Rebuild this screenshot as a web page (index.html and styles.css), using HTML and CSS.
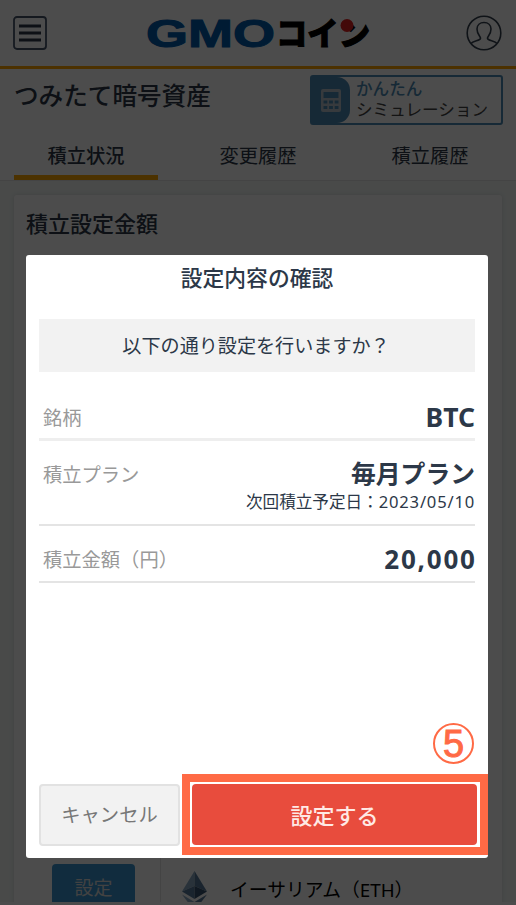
FILE: index.html
```html
<!DOCTYPE html>
<html lang="ja">
<head>
  <meta charset="utf-8">
  <title>つみたて暗号資産</title>
  <link rel="stylesheet" href="styles.css">
</head>
<body>

<div class="page">
  <header class="header">
    <svg class="menu-icon" viewBox="0 0 34 36">
      <rect x="1" y="2" width="32" height="32" rx="3" fill="none" stroke="#46546a" stroke-width="1.8"/>
      <path d="M6 11h22M6 18h22M6 25h22" stroke="#2c3848" stroke-width="2.8"/>
    </svg>
    <svg class="logo" viewBox="0 0 224 52">
      <text class="logo-gmo" x="0" y="39.500" textLength="129" lengthAdjust="spacingAndGlyphs">GMO</text>
      <text class="logo-coin" x="130" y="38" textLength="94" lengthAdjust="spacingAndGlyphs">コイン</text>
      <circle cx="201" cy="18.500" r="6.5" fill="#e02020"/>
    </svg>
    <svg class="user-icon" viewBox="0 0 36 36" fill="none" stroke="#35404f" stroke-width="1.6">
      <circle cx="18" cy="18" r="16.8"/>
      <path d="M5 28.500c2-3 9-2.500 9.500-5c.5-2-3.500-3.500-3.500-9.500c0-4 3-6.500 7-6.500s7 2.500 7 6.500c0 6-4 7.500-3.500 9.500c.5 2.500 7.500 2 9.500 5"/>
    </svg>
  </header>

  <div class="title-row">
    <h1>つみたて暗号資産</h1>
    <div class="simulation">
      <div class="simulation-icon">
        <svg viewBox="0 0 20 23" width="20" height="23">
          <rect width="20" height="23" rx="2" fill="#b8c4cc"/>
          <path d="M2.500 3h15v6h-15z" fill="#4c8ab4"/>
          <path d="M2.500 13h15M2.500 18.500h15" stroke="#4c8ab4" stroke-width="3" stroke-dasharray="3.800 1.800"/>
        </svg>
      </div>
      <div class="simulation-text"><b>かんたん</b><span>シミュレーション</span></div>
    </div>
  </div>

  <nav class="tabs">
    <div class="tab active">積立状況</div>
    <div class="tab">変更履歴</div>
    <div class="tab">積立履歴</div>
  </nav>

  <main class="content">
    <div class="card">
      <h2>積立設定金額</h2>
      <div class="coin-row">
        <div class="coin-action"><button class="set-button">設定</button></div>
        <svg class="eth-icon" viewBox="0 0 25 40">
          <path d="M12.500 0L0 20.500l12.500-5.500z" fill="#8ba9c4"/>
          <path d="M12.500 0L25 20.500 12.500 15z" fill="#587a99"/>
          <path d="M0 20.500L12.500 15v13z" fill="#587a99"/>
          <path d="M25 20.500L12.500 15v13z" fill="#37536e"/>
          <path d="M0 23.500l12.500 7.500v9z" fill="#8ba9c4"/>
          <path d="M25 23.500L12.500 31v9z" fill="#587a99"/>
        </svg>
        <span class="coin-name">イーサリアム（ETH）</span>
      </div>
    </div>
  </main>
</div>

<!-- Confirm dialog -->
<div class="overlay">
  <div class="modal">
    <h3>設定内容の確認</h3>
    <p class="message">以下の通り設定を行いますか？</p>
    <dl>
      <div class="row row-coin">
        <dt>銘柄</dt>
        <dd>BTC</dd>
      </div>
      <div class="row row-plan">
        <dt>積立プラン</dt>
        <dd>毎月プラン<small>次回積立予定日：<span class="date">2023/05/10</span></small></dd>
      </div>
      <div class="row row-amount">
        <dt>積立金額（円）</dt>
        <dd class="amount">20,000</dd>
      </div>
    </dl>
    <div class="step">5</div>
    <div class="buttons">
      <button class="cancel">キャンセル</button>
      <div class="highlight"><button class="submit">設定する</button></div>
    </div>
  </div>
</div>

</body>
</html>
```
FILE: styles.css
```css
* { box-sizing: border-box; }
body { margin: 0; background: #fff; color: #2c3848; font-family: "Noto Sans", "Noto Sans CJK JP", sans-serif; overflow: hidden; }
h1, h2, h3, p, dl, dd { margin: 0; }
button { font-family: inherit; padding: 0; }

.page { height: 902px; overflow: hidden; display: flex; flex-direction: column; }

.header { height: 69px; flex: none; border-bottom: 3px solid #ffa500; padding: 0 14px 0 13px; display: flex; align-items: center; justify-content: space-between; }
.menu-icon { width: 34px; height: 36px; }
.user-icon { width: 36px; height: 36px; }
.logo { width: 224px; height: 52px; margin-left: 3px; overflow: visible; }
.logo-gmo { font: bold 38px "Liberation Sans", sans-serif; fill: #005bac; stroke: #005bac; }
.logo-coin { font: 900 32px "Noto Sans CJK JP", sans-serif; fill: #000; stroke: #000; }

.title-row { height: 62px; flex: none; padding: 6px 13px 0 14px; display: flex; justify-content: space-between; }
h1 { font-size: 24.6px; line-height: 41px; font-weight: 500; }
.simulation { width: 193px; height: 50px; border: 2px solid #4c8ab4; border-radius: 3px; display: flex; }
.simulation-icon { width: 38px; background: #4c8ab4; border-radius: 0 13px 13px 0; display: flex; align-items: center; justify-content: center; }
.simulation-text { padding: 1px 0 0 6px; font-size: 16.6px; line-height: 21px; white-space: nowrap; }
.simulation-text b { display: block; color: #4c8ab4; font-weight: 500; }
.simulation-text span { display: block; color: #444; }

.tabs { height: 50px; flex: none; display: flex; border-bottom: 1px solid #e4e4e4; }
.tab { width: 172px; text-align: center; font-size: 19.3px; line-height: 50px; }
.tab.active { width: 144px; margin: 0 14px; border-bottom: 5px solid #ffa800; font-weight: 500; }

.content { flex: 1; background: #f3f8f6; padding: 14px 14px 0 14px; }
.card { height: 720px; background: #fff; border-radius: 3px; box-shadow: 0 0 5px rgba(0, 0, 0, .12); display: flex; flex-direction: column; justify-content: space-between; }
h2 { padding: 10px 12px; font-size: 22px; line-height: 36px; font-weight: 500; }
.coin-row { height: 61px; display: flex; }
.coin-action { width: 147px; border-right: 1px solid #e4e4e4; padding: 10px 0 0 38px; }
.set-button { width: 83px; height: 48px; border: 0; border-radius: 4px; background: #3a95d0; color: #ddd; font-size: 19px; line-height: 48px; }
.eth-icon { width: 25px; height: 40px; margin: 17px 0 0 21px; }
.coin-name { margin-left: 23px; font-size: 18.8px; line-height: 28px; padding-top: 22px; color: #000; }

.overlay { position: fixed; inset: 0; background: rgba(0, 0, 0, .7); padding: 255px 28px 47px 26px; }
.modal { height: 603px; background: #fff; border-radius: 3px; padding: 0 0 3px 13px; display: flex; flex-direction: column; }
h3 { height: 64px; padding-right: 13px; text-align: center; font-size: 21.8px; line-height: 46px; font-weight: 500; }
.message { height: 53px; margin: 0 13px 26px 0; padding-right: 2px; background: #f2f2f2; text-align: center; font-size: 19.1px; line-height: 54px; }
dl { margin-right: 13px; }
.row { display: flex; justify-content: space-between; border-bottom: 2px solid #e4e4e4; }
.row-coin { height: 43px; border-bottom: 3px solid #eee; }
.row-plan { height: 85px; padding-top: 14px; }
.row-amount { height: 57px; padding-top: 14px; }
dt { padding-left: 4px; font-size: 19.3px; line-height: 40px; color: #999; }
dd { font-size: 26.500px; line-height: 38px; font-weight: bold; text-align: right; }
.row-plan dd { font-size: 24.8px; line-height: 37px; }
small { display: block; font-size: 16.6px; line-height: 19px; font-weight: normal; }
.date { letter-spacing: .8px; }
.row .amount { font-size: 26px; letter-spacing: 1.8px; margin-right: -1.8px; }

.step { width: 41px; height: 41px; margin: auto 14px 10px auto; border: 2px solid #ff6a45; border-radius: 50%; color: #ff6a45; font: 38px/38px "Liberation Sans", sans-serif; text-align: center; -webkit-text-stroke: 1px #ff6a45; }
.buttons { display: flex; justify-content: space-between; }
.cancel { width: 141px; height: 62px; margin-top: 10px; border: 2px solid #e2e2e2; border-radius: 4px; background: #f2f2f2; color: #777; font-size: 19.3px; padding-bottom: 3px; }
.highlight { width: 306px; height: 81px; border: 8px solid #ff6a45; padding: 2px 3px 2px 2px; }
.submit { display: block; width: 100%; height: 61px; border: 0; border-radius: 4px; background: #e84c3d; color: #ffe9e5; font-size: 22px; font-weight: 500; padding-bottom: 2px; }
```
